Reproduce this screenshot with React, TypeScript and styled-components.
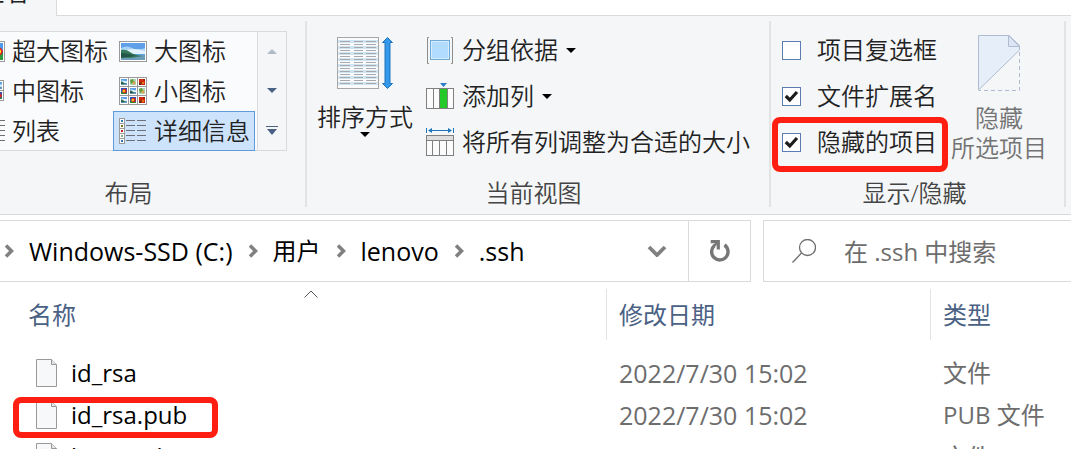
import React from "react";
import styled, { createGlobalStyle, css } from "styled-components";

const GlobalStyle = createGlobalStyle`
  *, *::before, *::after { box-sizing: border-box; }
  body {
    margin: 0;
    background: #fff;
    overflow: hidden;
    font-family: "Open Sans", "Noto Sans CJK SC", sans-serif;
    font-size: 24px;
    line-height: 32px;
    color: #222;
  }
  button, input {
    font: inherit;
    color: inherit;
    margin: 0;
    padding: 0;
    border: 0;
    background: none;
  }
  svg { display: block; flex: none; }
`;

const line = "#d9dadc";

const Window = styled.main`
  height: 100vh;
  overflow: hidden;
`;

const TabStrip = styled.nav`
  display: flex;
  height: 16px;
  overflow: hidden;
  background: #fff;
`;

const Tab = styled.button`
  display: flex;
  align-items: flex-end;
  justify-content: flex-end;
  width: 57px;
  height: 16px;
  padding: 0 27px 8px 0;
  white-space: nowrap;
  background: #f4f6f8;
  border-right: 1px solid ${line};
`;

const TabFill = styled.div`
  flex: 1;
  border-bottom: 1px solid ${line};
`;

const Ribbon = styled.section`
  display: flex;
  padding: 5px 0 7px;
  background: #f4f6f8;
  border-bottom: 1px solid ${line};
  font-weight: 350;
`;

const Group = styled.section<{ $left: number; $right: number }>`
  flex: none;
  padding: 0 ${(p) => p.$right}px 0 ${(p) => p.$left}px;
  border-right: 2px solid #e2e3e5;
`;

const LayoutGroup = styled(Group)`
  margin-left: -30px;
`;

const GroupBody = styled.div<{ $gap: number }>`
  display: flex;
  gap: ${(p) => p.$gap}px;
  height: 158px;
`;

const GroupLabel = styled.h2`
  margin: 0;
  font-size: 24px;
  font-weight: inherit;
  line-height: 28px;
  text-align: center;
  color: #444;
`;

const Gallery = styled.div`
  display: flex;
  align-self: flex-start;
  margin-top: 10px;
  border: 1px solid ${line};
  background: #fafbfd;
`;

const GalleryGrid = styled.div`
  display: grid;
  grid-template-columns: auto auto;
  grid-auto-rows: 40px;
  margin: -1px 2px -1px 0;
`;

const GalleryItem = styled.button<{ $selected?: boolean }>`
  display: flex;
  align-items: center;
  gap: 7px;
  padding: 0 4px 0 5px;
  border: 1px solid transparent;
  white-space: nowrap;
  ${(p) =>
    p.$selected &&
    css`
      background: #cde3fb;
      border-color: #5f9bdc;
    `}
`;

const GalleryScroll = styled.div`
  display: grid;
  grid-template-rows: repeat(3, 1fr);
  width: 29px;
  background: #f4f6f8;
  border-left: 1px solid ${line};
`;

const ScrollButton = styled.button`
  display: grid;
  place-items: center;
`;

const TallButton = styled.button<{ $top: number; $muted?: boolean }>`
  display: flex;
  flex-direction: column;
  align-items: center;
  align-self: flex-start;
  padding-top: ${(p) => p.$top}px;
  line-height: 30px;
  color: ${(p) => (p.$muted ? "#737373" : "inherit")};
`;

const TallLabel = styled.span<{ $top: number }>`
  margin-top: ${(p) => p.$top}px;
`;

const Stack = styled.div`
  display: grid;
  grid-auto-rows: 46px;
  align-content: start;
  padding-top: 6px;
`;

const RowButton = styled.button`
  display: flex;
  align-items: center;
  gap: 8px;
  white-space: nowrap;
`;

const CheckRow = styled.label`
  position: relative;
  display: flex;
  align-items: center;
  gap: 16px;
  white-space: nowrap;
`;

const CheckSlot = styled.span`
  display: grid;
  place-items: center;
  > * { grid-area: 1 / 1; }
  > svg { visibility: hidden; pointer-events: none; }
  > input:checked + svg { visibility: visible; }
`;

const CheckInput = styled.input`
  appearance: none;
  width: 19px;
  height: 19px;
  background: #fff;
  border: 1px solid #5b7db1;
`;

const Mark = styled.span<{ $inset: string }>`
  position: absolute;
  inset: ${(p) => p.$inset};
  border: 6px solid #ff1f12;
  border-radius: 8px;
  pointer-events: none;
`;

const AddressRow = styled.div`
  display: flex;
  gap: 12px;
  margin-top: 5px;
`;

const AddressBar = styled.div`
  display: flex;
  flex: 1;
  height: 62px;
  border: 1px solid ${line};
  border-left: 0;
`;

const Crumbs = styled.nav`
  display: flex;
  flex: 1;
  align-items: center;
  gap: 15px;
  padding-left: 4px;
  color: #000;
`;

const Crumb = styled.a`
  color: inherit;
  font-size: 25px;
  text-decoration: none;
  white-space: nowrap;
  &:lang(zh) { font-size: 24px; }
`;

const BarButton = styled.button<{ $divided?: boolean }>`
  display: grid;
  place-items: center;
  width: 62px;
  border-left: ${(p) => (p.$divided ? `1px solid ${line}` : "0")};
`;

const SearchBox = styled.label`
  display: flex;
  flex: none;
  width: 308px;
  align-items: center;
  gap: 28px;
  height: 62px;
  padding-left: 28px;
  border: 1px solid ${line};
  border-right: 0;
`;

const SearchInput = styled.input`
  flex: 1;
  min-width: 0;
  height: 40px;
  outline: 0;
  &::placeholder { color: #6d6d6d; opacity: 1; }
`;

const FileArea = styled.section`
  padding-left: 16px;
`;

const FileTable = styled.table`
  width: 100%;
  table-layout: fixed;
  border-collapse: separate;
  border-spacing: 0;
  color: #6d6d6d;
`;

const HeadCell = styled.th<{ $width?: number }>`
  width: ${(p) => (p.$width ? `${p.$width}px` : "auto")};
  padding: 7px 0 12px;
  font-weight: 400;
  text-align: left;
`;

const HeadButton = styled.button<{ $first?: boolean }>`
  position: relative;
  display: block;
  width: 100%;
  height: 51px;
  padding-left: 12px;
  border-left: ${(p) => (p.$first ? "0" : "1px solid #e2e3e5")};
  text-align: left;
  color: #4a6184;
`;

const SortMark = styled.span`
  position: absolute;
  top: 1px;
  left: 0;
  right: 0;
  display: grid;
  place-items: center;
`;

const Cell = styled.td<{ $size?: number }>`
  height: 42px;
  padding: 0 0 0 13px;
  font-size: ${(p) => p.$size ?? 24}px;
  white-space: nowrap;
`;

const NameCell = styled(Cell)`
  position: relative;
  padding-left: 20px;
  color: #000;
`;

const FileName = styled.div`
  display: flex;
  align-items: center;
  gap: 14px;
`;

const PubMark = styled(Mark)`
  right: auto;
  width: 205px;
`;

const Caret = ({ color = "#000", up = false }: { color?: string; up?: boolean }) => (
  <svg width="10" height="5" viewBox="0 0 10 5">
    <path d={up ? "M0 5H10L5 0Z" : "M0 0H10L5 5Z"} fill={color} />
  </svg>
);

const Scene = ({ x, y, w, h }: { x: number; y: number; w: number; h: number }) => (
  <svg x={x} y={y} width={w} height={h} viewBox="0 0 24 17" preserveAspectRatio="none">
    <rect width="24" height="17" fill="#5f9fe8" />
    <path d="M0 5Q6 2 11 5T24 5V11H0Z" fill="#a9d3f5" />
    <path d="M3 8Q12 4 24 8V11H3Z" fill="#e3f2fb" />
    <path d="M0 12H24V17H0Z" fill="#6c9cb8" />
    <path d="M0 7Q5 6 9 9T22 13L9 15L0 14Z" fill="#377a5d" />
    <path d="M0 10Q8 10 15 13L0 15Z" fill="#235847" />
  </svg>
);

const Flower = ({ x, y, w, h }: { x: number; y: number; w: number; h: number }) => (
  <svg x={x} y={y} width={w} height={h} viewBox="0 0 6 6" preserveAspectRatio="none">
    <rect width="6" height="6" fill="#2b50b8" />
    <path d="M0 6V4L6 5V6Z" fill="#2c8a35" />
    <circle cx="3.5" cy="3" r="2.3" fill="#e0281a" />
    <circle cx="2.8" cy="3" r="1.3" fill="#f5c21a" />
  </svg>
);

const Leaf = ({ x, y }: { x: number; y: number }) => (
  <g transform={`translate(${x} ${y})`}>
    <rect width="6" height="6" fill="#a9d6b0" />
    <path d="M0 1L3 0L4 3L1 5Z" fill="#5f9e3b" />
    <circle cx="4" cy="4" r="1.4" fill="#e49a4b" />
  </g>
);

const Rose = ({ x, y }: { x: number; y: number }) => (
  <g transform={`translate(${x} ${y})`}>
    <rect width="6" height="6" fill="#d3280e" />
    <path d="M0 4L3 3L2 6H0ZM4 0H6V2Z" fill="#69300e" />
    <circle cx="4" cy="4" r="1" fill="#f08b1b" />
  </g>
);

const LargeIcon = () => (
  <svg width="28" height="21" viewBox="0 0 28 21">
    <rect x=".5" y=".5" width="27" height="20" fill="#fff" stroke="#9a9a9a" />
    <Scene x={2} y={2} w={24} h={17} />
  </svg>
);

const ExtraLargeIcon = () => (
  <svg width="28" height="21" viewBox="0 0 28 21">
    <rect x=".5" y=".5" width="27" height="20" fill="#fff" stroke="#9a9a9a" />
    <Flower x={2} y={2} w={24} h={17} />
    <path d="M21 2H26V10H21Z" fill="#4d9bea" />
    <path d="M21 19V15L26 12V19Z" fill="#2f9a3e" />
    <path d="M21 6L24 7L26 10L24 14L21 15Z" fill="#e5251b" />
    <path d="M21 8L24 9V12L21 13Z" fill="#ffd022" />
  </svg>
);

const MediumIcon = () => (
  <svg width="28" height="22" viewBox="0 0 28 22">
    <rect x=".5" y=".5" width="26" height="20" fill="#fff" stroke="#9a9a9a" />
    <path d="M13.5 0V21M0 10.5H27" stroke="#9a9a9a" />
    <Scene x={2} y={2} w={10} h={7} />
    <Scene x={15} y={2} w={10} h={7} />
    <Flower x={2} y={12} w={10} h={7} />
    <Flower x={15} y={12} w={10} h={7} />
  </svg>
);

const SmallIcon = () => (
  <svg width="28" height="28" viewBox="0 0 28 28">
    <rect x=".5" y=".5" width="27" height="27" fill="#fff" stroke="#9a9a9a" />
    <path d="M9.5 0V28M18.5 0V28M0 9.5H28M0 18.5H28" stroke="#9a9a9a" />
    <Scene x={2} y={2} w={6} h={6} />
    <Leaf x={11} y={2} />
    <Rose x={20} y={2} />
    <Flower x={2} y={11} w={6} h={6} />
    <Scene x={11} y={11} w={6} h={6} />
    <Leaf x={20} y={11} />
    <Scene x={2} y={20} w={6} h={6} />
    <Flower x={11} y={20} w={6} h={6} />
    <Rose x={20} y={20} />
  </svg>
);

const lineRows = [3, 8, 13, 18, 23];
const thumbColors = ["#2a7fb0", "#7b7a1e", "#c9251a", "#86a98b", "#2a6fb0"];

const ListIcon = () => (
  <svg width="28" height="26" viewBox="0 0 28 26">
    {lineRows.map((y) => (
      <path key={y} d={`M1 ${y - 0.5}H13M17 ${y - 0.5}H28`} stroke="#6f6f6f" />
    ))}
  </svg>
);

const DetailsIcon = () => (
  <svg width="28" height="26" viewBox="0 0 28 26">
    <rect x=".5" y=".5" width="5" height="25" fill="#fff" stroke="#9a9a9a" />
    {lineRows.map((y, i) => (
      <g key={y}>
        <path d={`M0 ${y + 2.5}H6`} stroke="#9a9a9a" />
        <rect x="2" y={y - 1} width="2" height="2" fill={thumbColors[i]} />
        <path d={`M7 ${y - 0.5}H16M18 ${y - 0.5}H27`} stroke="#6f6f78" />
      </g>
    ))}
  </svg>
);

const SortIcon = () => (
  <svg width="56" height="52" viewBox="0 0 56 52">
    <rect x=".5" y=".5" width="41" height="51" fill="#fbfbfb" stroke="#a7a7a7" />
    {[3, 9, 15, 21, 27, 33, 39, 45].map((y) => (
      <rect key={y} x="1" y={y} width="40" height="3" fill="#cfe6f2" />
    ))}
    {Array.from({ length: 15 }, (_, i) => 4.5 + i * 3).map((y) => (
      <path key={y} d={`M3 ${y}H13M17 ${y}H26M29 ${y}H39`} stroke="#a9a9ad" />
    ))}
    <path
      d="M50.5 .5L55.5 5.5H53V46.5H55.5L50.5 51.5L45.5 46.5H48V5.5H45.5Z"
      fill="#3399ea"
      stroke="#1f74bb"
    />
  </svg>
);

const GroupByIcon = () => (
  <svg width="28" height="27" viewBox="0 0 28 27">
    <path d="M3 .5H1.5V26.5H3M25 .5H26.5V26.5H25" fill="none" stroke="#8d8d8d" />
    <rect x="4.5" y="3.5" width="19" height="19" fill="#b1dcff" stroke="#6ea9d8" />
    <rect x="5.5" y="4.5" width="17" height="17" fill="none" stroke="#d6edff" />
  </svg>
);

const AddColumnIcon = () => (
  <svg width="28" height="27" viewBox="0 0 28 27">
    <path d="M14 0H21L17.5 4Z" fill="#2a7cc4" />
    <rect x=".5" y="5.5" width="27" height="20" fill="#fbfbfb" stroke="#808080" />
    <path d="M7.5 5V26M13.5 5V26M21.5 5V26" stroke="#808080" />
    <rect x="14" y="6" width="7" height="19" fill="#22c928" />
  </svg>
);

const FitColumnsIcon = () => (
  <svg width="28" height="28" viewBox="0 0 28 28">
    <path d="M.5 0V5M27.5 0V5M4 2.5H24" stroke="#1f74bb" />
    <path d="M2 2.5L6 0V5ZM26 2.5L22 0V5Z" fill="#1f74bb" />
    <rect x=".5" y="7.5" width="27" height="20" fill="#fbfbfb" stroke="#808080" />
    <rect x="1" y="8" width="26" height="4" fill="#dedede" />
    <path d="M0 12.5H28M6.5 12V28M13.5 12V28M20.5 12V28" stroke="#808080" />
  </svg>
);

const HideIcon = () => (
  <svg width="42" height="56" viewBox="0 0 42 56">
    <path d="M.5 .5H31L41.5 10.5V15L.5 55Z" fill="#e6eefa" stroke="#aebbd0" />
    <path d="M30.5 .5V11.5H41.5Z" fill="#dbe5f3" stroke="#aebbd0" />
    <path d="M41.5 17V55.5H1" fill="none" stroke="#aebbd0" strokeDasharray="4 3" />
  </svg>
);

const Tick = () => (
  <svg width="15" height="13" viewBox="0 0 15 13">
    <path d="M1.8 6L5.8 10L13 2" fill="none" stroke="#1c1c1c" strokeWidth="3.2" />
  </svg>
);

const CrumbArrow = () => (
  <svg width="10" height="14" viewBox="0 0 10 14">
    <path d="M2 1.5L7.5 7L2 12.5" fill="none" stroke="#808080" strokeWidth="3.5" />
  </svg>
);

const DownArrow = () => (
  <svg width="20" height="12" viewBox="0 0 20 12">
    <path d="M2 2L10 10L18 2" fill="none" stroke="#808080" strokeWidth="3.8" />
  </svg>
);

const RefreshIcon = () => (
  <svg width="20" height="22" viewBox="0 0 20 22">
    <path d="M14.5 5A8.2 8.2 0 1 1 4.5 5.5" fill="none" stroke="#777" strokeWidth="3.4" />
    <path d="M.7 1.7H8.3V9.5" fill="none" stroke="#777" strokeWidth="3.2" />
    <path d="M3.5 6L8 2.5" stroke="#777" strokeWidth="2.5" />
  </svg>
);

const SearchIcon = () => (
  <svg width="24" height="24" viewBox="0 0 24 24">
    <circle cx="15.5" cy="8.5" r="8" fill="none" stroke="#6d6d6d" strokeWidth="1.3" />
    <path d="M9.5 14L.5 23.5" stroke="#6d6d6d" strokeWidth="1.3" />
  </svg>
);

const FileIcon = () => (
  <svg width="21" height="28" viewBox="0 0 21 28">
    <path d="M.5 .5H15.5L20.5 5.5V27.5H.5Z" fill="#f7f8f9" stroke="#999" />
    <path d="M15.5 .5V5.5H20.5" fill="#e6e6e6" stroke="#999" />
  </svg>
);

const files = [
  { name: "id_rsa", date: "2022/7/30 15:02", type: "文件" },
  { name: "id_rsa.pub", date: "2022/7/30 15:02", type: "PUB 文件", marked: true },
  { name: "known_hosts", date: "2022/7/30 15:02", type: "文件" },
];

const views = [
  { label: "超大图标", icon: <ExtraLargeIcon /> },
  { label: "大图标", icon: <LargeIcon /> },
  { label: "中图标", icon: <MediumIcon /> },
  { label: "小图标", icon: <SmallIcon /> },
  { label: "列表", icon: <ListIcon /> },
  { label: "详细信息", icon: <DetailsIcon />, selected: true },
];

const options = [
  { label: "项目复选框", on: false },
  { label: "文件扩展名", on: true },
  { label: "隐藏的项目", on: true, marked: true },
];

const crumbs = [
  { label: "Windows-SSD (C:)", lang: "en" },
  { label: "用户", lang: "zh" },
  { label: "lenovo", lang: "en" },
  { label: ".ssh", lang: "en" },
];

export default function App() {
  return (
    <Window>
      <GlobalStyle />
      <TabStrip>
        <Tab>查看</Tab>
        <TabFill />
      </TabStrip>

      <Ribbon>
        <LayoutGroup $left={0} $right={18}>
          <GroupBody $gap={0}>
            <Gallery>
              <GalleryGrid>
                {views.map((v) => (
                  <GalleryItem key={v.label} $selected={v.selected}>
                    {v.icon}
                    {v.label}
                  </GalleryItem>
                ))}
              </GalleryGrid>
              <GalleryScroll>
                <ScrollButton aria-label="向上">
                  <Caret up color="#b3bbc8" />
                </ScrollButton>
                <ScrollButton aria-label="向下">
                  <Caret color="#4a6184" />
                </ScrollButton>
                <ScrollButton aria-label="更多">
                  <svg width="12" height="9" viewBox="0 0 12 9">
                    <path d="M0 .5H12" stroke="#4a6184" />
                    <path d="M1 3H11L6 9Z" fill="#4a6184" />
                  </svg>
                </ScrollButton>
              </GalleryScroll>
            </Gallery>
          </GroupBody>
          <GroupLabel>布局</GroupLabel>
        </LayoutGroup>

        <Group $left={10} $right={19}>
          <GroupBody $gap={13}>
            <TallButton $top={16}>
              <SortIcon />
              <TallLabel $top={13}>排序方式</TallLabel>
              <Caret />
            </TallButton>
            <Stack>
              <RowButton>
                <GroupByIcon />
                分组依据
                <Caret />
              </RowButton>
              <RowButton>
                <AddColumnIcon />
                添加列
                <Caret />
              </RowButton>
              <RowButton>
                <FitColumnsIcon />
                将所有列调整为合适的大小
              </RowButton>
            </Stack>
          </GroupBody>
          <GroupLabel>当前视图</GroupLabel>
        </Group>

        <Group $left={11} $right={17}>
          <GroupBody $gap={14}>
            <Stack>
              {options.map((o) => (
                <CheckRow key={o.label}>
                  <CheckSlot>
                    <CheckInput type="checkbox" defaultChecked={o.on} />
                    <Tick />
                  </CheckSlot>
                  {o.label}
                  {o.marked && <Mark $inset="-2px -11px -7px -10px" />}
                </CheckRow>
              ))}
            </Stack>
            <TallButton $top={14} $muted>
              <HideIcon />
              <TallLabel $top={12}>
                隐藏
                <br />
                所选项目
              </TallLabel>
            </TallButton>
          </GroupBody>
          <GroupLabel>显示/隐藏</GroupLabel>
        </Group>
      </Ribbon>

      <AddressRow>
        <AddressBar>
          <Crumbs>
            {crumbs.map((c) => (
              <React.Fragment key={c.label}>
                <CrumbArrow />
                <Crumb href="#" lang={c.lang}>
                  {c.label}
                </Crumb>
              </React.Fragment>
            ))}
          </Crumbs>
          <BarButton aria-label="展开">
            <DownArrow />
          </BarButton>
          <BarButton $divided aria-label="刷新">
            <RefreshIcon />
          </BarButton>
        </AddressBar>
        <SearchBox>
          <SearchIcon />
          <SearchInput type="text" aria-label="搜索" placeholder="在 .ssh 中搜索" />
        </SearchBox>
      </AddressRow>

      <FileArea>
        <FileTable>
          <thead>
            <tr>
              <HeadCell>
                <HeadButton $first>
                  名称
                  <SortMark>
                    <svg width="14" height="8" viewBox="0 0 14 8">
                      <path d="M.5 7.5L7 1L13.5 7.5" fill="none" stroke="#555" />
                    </svg>
                  </SortMark>
                </HeadButton>
              </HeadCell>
              <HeadCell $width={324}>
                <HeadButton>修改日期</HeadButton>
              </HeadCell>
              <HeadCell $width={141}>
                <HeadButton>类型</HeadButton>
              </HeadCell>
            </tr>
          </thead>
          <tbody>
            {files.map((f) => (
              <tr key={f.name}>
                <NameCell>
                  <FileName>
                    <FileIcon />
                    {f.name}
                  </FileName>
                  {f.marked && <PubMark $inset="3px auto -2px -3px" />}
                </NameCell>
                <Cell $size={25}>{f.date}</Cell>
                <Cell>{f.type}</Cell>
              </tr>
            ))}
          </tbody>
        </FileTable>
      </FileArea>
    </Window>
  );
}
